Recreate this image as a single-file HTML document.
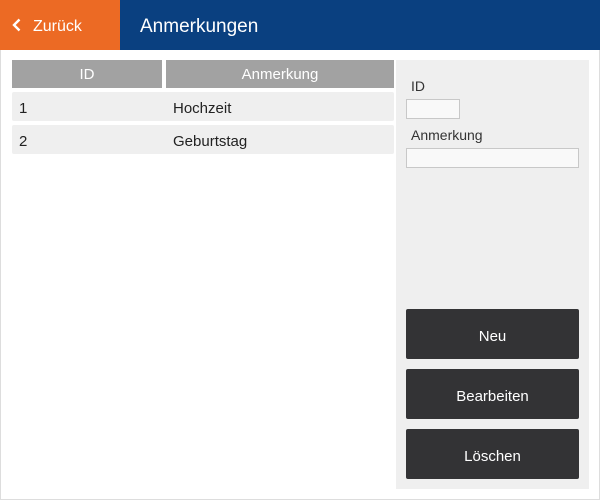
<!DOCTYPE html><html><head><style>
body{margin:0;width:600px;height:500px;position:relative;overflow:hidden;background:#fff;font-family:"Segoe UI","Liberation Sans",sans-serif;}
div{position:absolute;box-sizing:border-box}
.t{font-size:15px;color:#222}
.b{background:#333335;color:#fff;font-size:15px;text-align:center;line-height:56px;left:406px;width:173px;height:50px;border-radius:2px}
</style></head><body>
<div style="left:0;top:0;width:600px;height:500px;border:1px solid #ddd;border-top:none"></div>
<div style="left:0;top:0;width:120px;height:50px;background:#ec6a24;color:#fff;font-size:16px;line-height:54px;padding-left:33px">Zurück</div>
<svg style="position:absolute;left:12px;top:18px" width="10" height="14"><path d="M7.5 1.5 L2 7 L7.5 12.5" stroke="#fff" stroke-width="2.4" fill="none"/></svg>
<div style="left:120px;top:0;width:480px;height:50px;background:#0a4080;color:#fff;font-size:19px;line-height:54px;padding-left:20px">Anmerkungen</div>
<div style="left:12px;top:60px;width:150px;height:28px;background:#a2a2a2;color:#fff;font-size:15px;text-align:center;line-height:30px">ID</div>
<div style="left:166px;top:60px;width:228px;height:28px;background:#a2a2a2;color:#fff;font-size:15px;text-align:center;line-height:30px">Anmerkung</div>
<div style="left:12px;top:92px;width:382px;height:29px;background:#efefef;border-radius:2px"></div>
<div style="left:12px;top:125px;width:382px;height:29px;background:#efefef;border-radius:2px"></div>
<div class="t" style="left:19px;top:100px">1</div><div class="t" style="left:173px;top:100px">Hochzeit</div>
<div class="t" style="left:19px;top:133px">2</div><div class="t" style="left:173px;top:133px">Geburtstag</div>
<div style="left:396px;top:60px;width:193px;height:429px;background:#efefef"></div>
<div style="left:411px;top:78px;font-size:14px;color:#333">ID</div>
<div style="left:406px;top:99px;width:54px;height:20px;background:#f9f9f9;border:1px solid #c8c8c8"></div>
<div style="left:411px;top:127px;font-size:14px;color:#333">Anmerkung</div>
<div style="left:406px;top:148px;width:173px;height:20px;background:#f9f9f9;border:1px solid #c8c8c8"></div>
<div class="b" style="top:309px">Neu</div>
<div class="b" style="top:369px">Bearbeiten</div>
<div class="b" style="top:429px">Löschen</div>
</body></html>
